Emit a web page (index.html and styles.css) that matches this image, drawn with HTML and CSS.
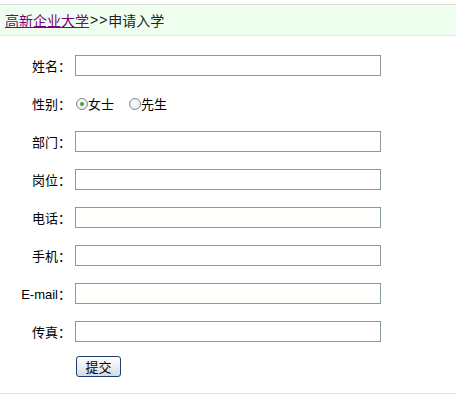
FILE: index.html
```html
<!DOCTYPE html>
<html lang="zh">
<head>
<meta charset="utf-8">
<title>申请入学</title>
<link rel="stylesheet" href="styles.css">
</head>
<body>
<div class="crumb"><a class="crumb-link" href="#">高新企业大学</a><span class="sep">&gt;&gt;</span>申请入学</div>
<form class="form">
  <div class="grid">
    <label class="lbl">姓名：</label><span class="field"><span class="input"></span></span>
    <label class="lbl">性别：</label>
    <span class="field radios">
      <span class="radio checked"></span><span class="rtext">女士</span>
      <span class="radio"></span><span class="rtext">先生</span>
    </span>
    <label class="lbl">部门：</label><span class="field"><span class="input"></span></span>
    <label class="lbl">岗位：</label><span class="field"><span class="input"></span></span>
    <label class="lbl">电话：</label><span class="field"><span class="input"></span></span>
    <label class="lbl">手机：</label><span class="field"><span class="input"></span></span>
    <label class="lbl">E-mail：</label><span class="field"><span class="input"></span></span>
    <label class="lbl">传真：</label><span class="field"><span class="input"></span></span>
  </div>
  <div class="actions"><span class="btn">提交</span></div>
</form>
<div class="rule"></div>
</body>
</html>
```

FILE: styles.css
```css
html, body {
  margin: 0;
  padding: 0;
  background: #ffffff;
}
body {
  font-family: "Liberation Sans", "Noto Sans CJK SC", sans-serif;
  font-size: 13px;
  color: #000;
}
.crumb {
  margin-top: 4px;
  height: 30px;
  border-top: 1px solid #d9dcd9;
  border-bottom: 1px solid #dfe8df;
  background: #efffef;
  padding-left: 5px;
  display: flex;
  align-items: center;
  font-size: 14px;
  color: #222;
}
.crumb-link {
  color: #800080;
  text-decoration: underline;
}
.sep {
  letter-spacing: 1px;
  padding-left: 1px;
}
.form {
  padding-top: 19px;
}
.grid {
  display: grid;
  grid-template-columns: 71px 306px;
  column-gap: 4px;
  row-gap: 17px;
  grid-auto-rows: 21px;
}
.lbl {
  display: flex;
  align-items: center;
  justify-content: flex-end;
  white-space: nowrap;
}
.field {
  display: flex;
  align-items: center;
}
.input {
  box-sizing: border-box;
  width: 306px;
  height: 21px;
  border: 1px solid #899a9b;
  background: #fffffd;
}
.radio {
  box-sizing: border-box;
  width: 12px;
  height: 12px;
  border-radius: 50%;
  border: 1px solid #7f8b8c;
  background: radial-gradient(circle at 40% 40%, #ffffff, #dfe3e3);
  margin-left: 1px;
  display: flex;
  align-items: center;
  justify-content: center;
}
.radio + .rtext + .radio {
  margin-left: 15px;
}
.radio.checked::after {
  content: "";
  width: 4px;
  height: 4px;
  border-radius: 50%;
  background: #3aa03a;
}
.actions {
  margin-top: 14px;
  padding-left: 76px;
  display: flex;
}
.btn {
  box-sizing: border-box;
  width: 45px;
  height: 21px;
  border: 1px solid #1f3e6e;
  border-radius: 3px;
  background: linear-gradient(#ffffff, #e8ebf2 60%, #d5dbe6);
  display: flex;
  align-items: center;
  justify-content: center;
  font-size: 13px;
}
.rule {
  margin-top: 16px;
  height: 1px;
  background: #e2e2e2;
}
```
